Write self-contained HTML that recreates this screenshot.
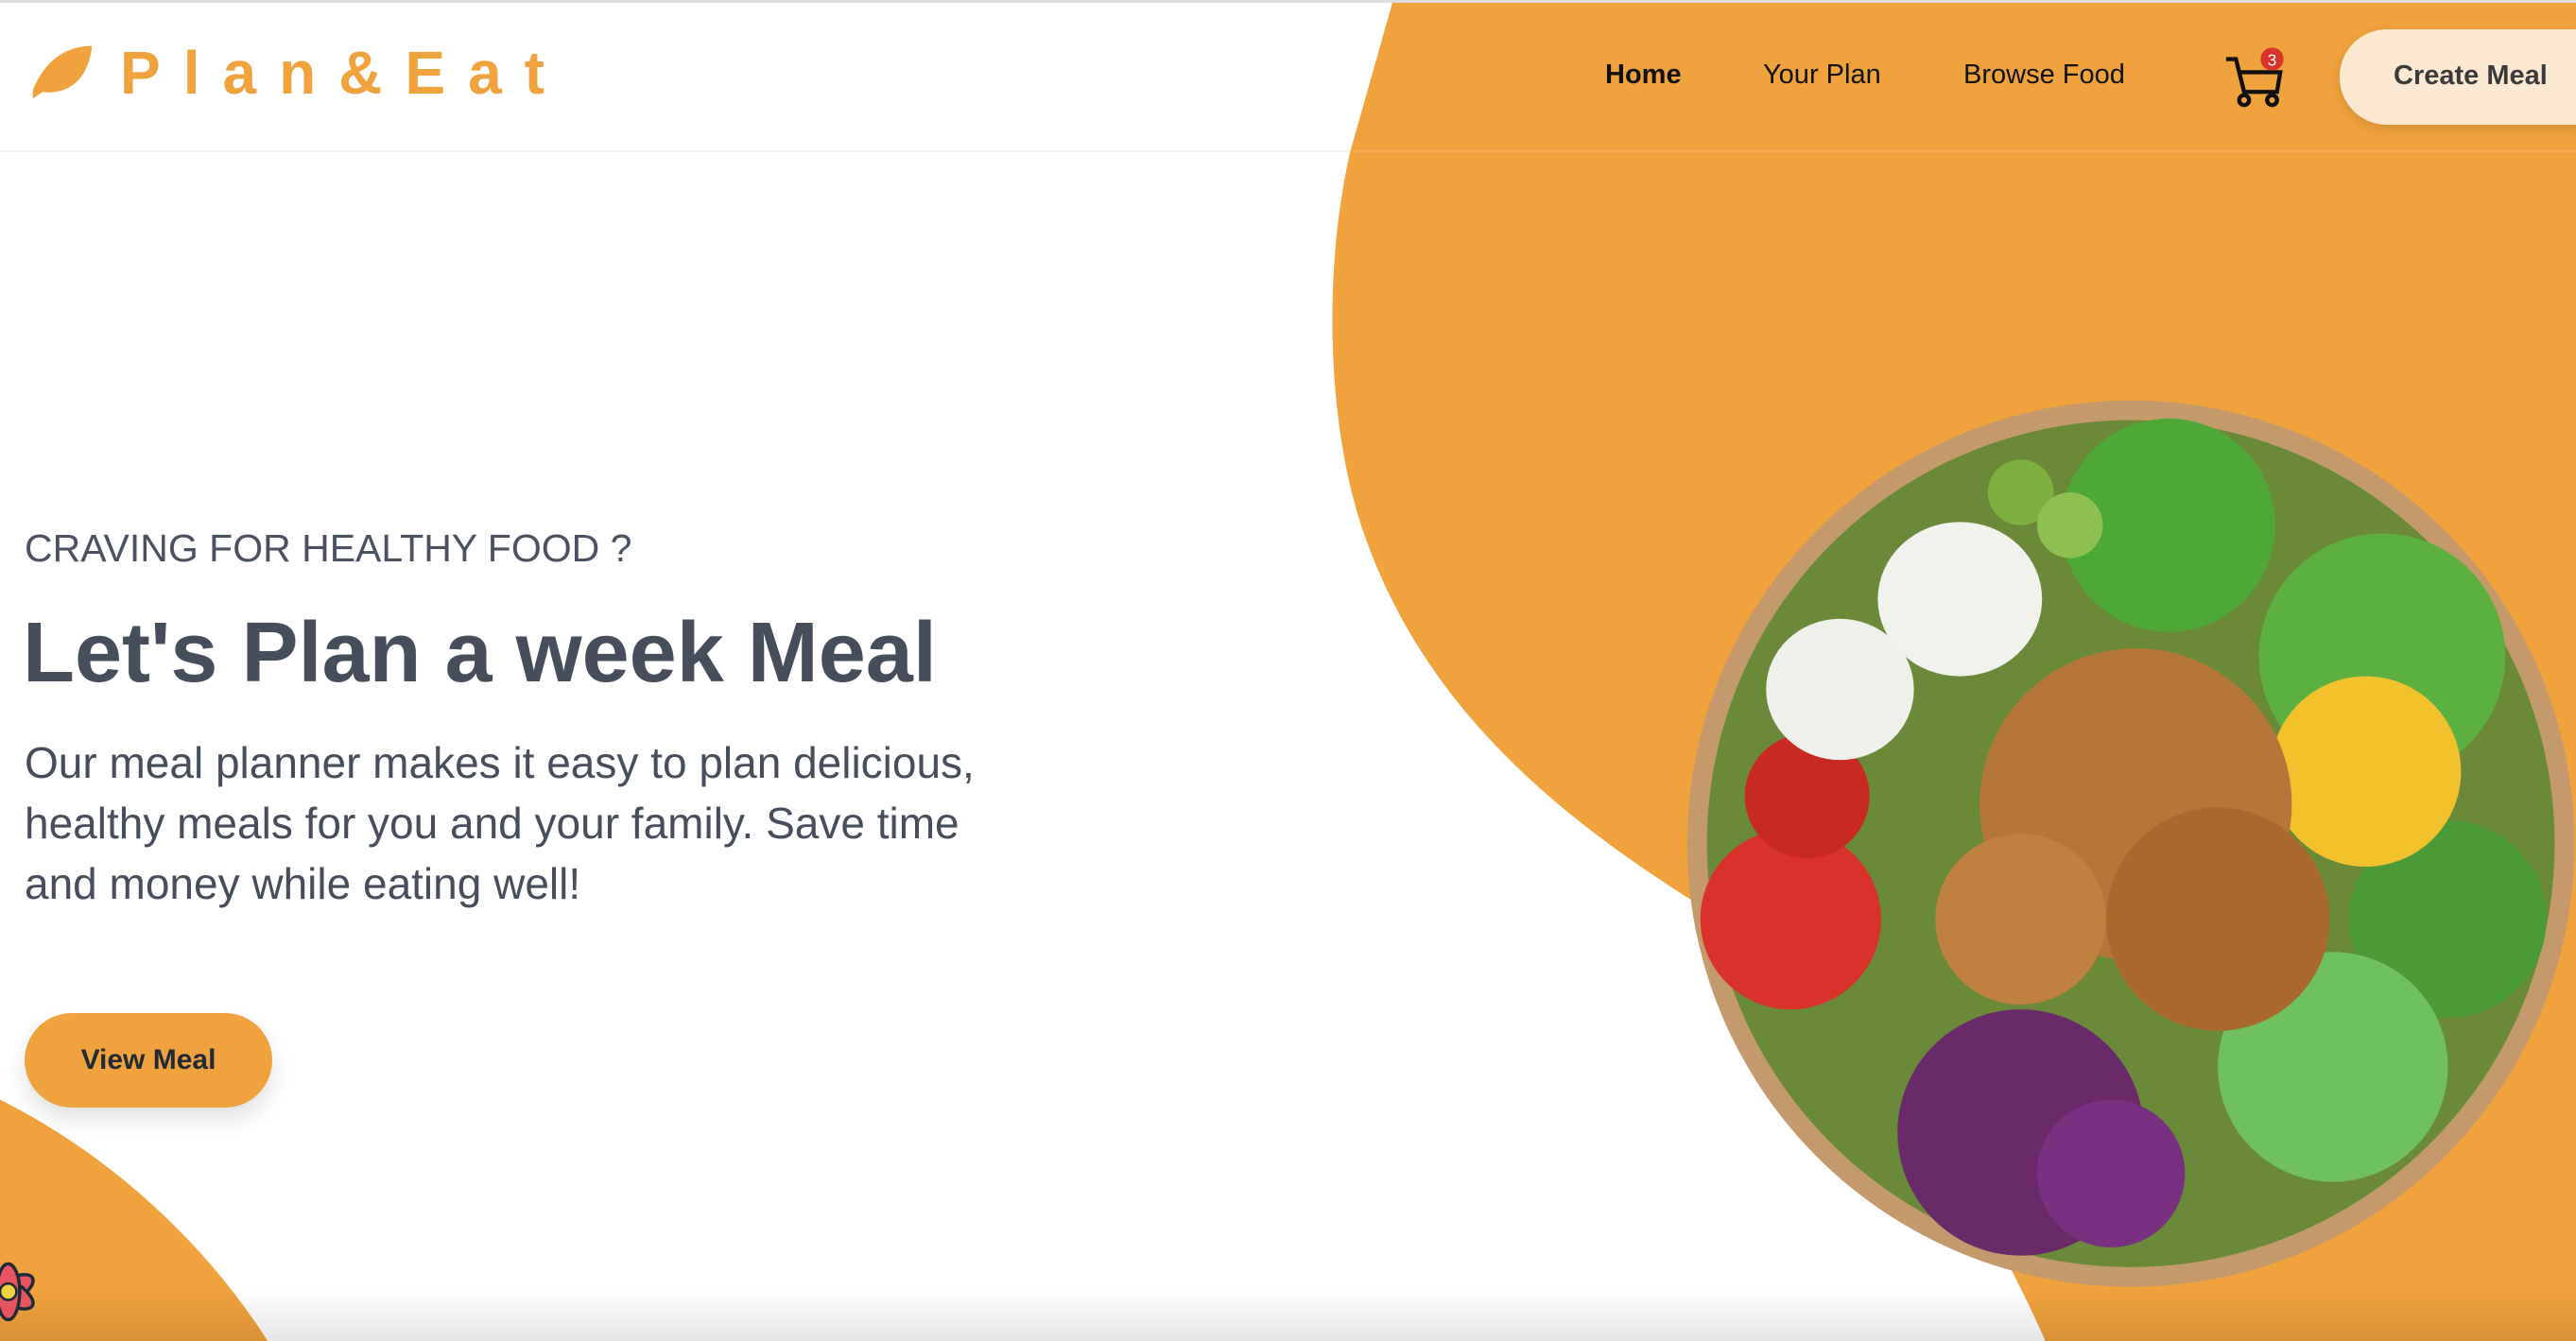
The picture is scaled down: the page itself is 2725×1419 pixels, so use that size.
<!DOCTYPE html>
<html><head><meta charset="utf-8"><style>
html,body{margin:0;padding:0}
body{width:2725px;height:1419px;position:relative;overflow:hidden;background:#fff;font-family:"Liberation Sans",sans-serif}
svg.bg{position:absolute;left:0;top:0;width:2725px;height:1419px}
.topline{position:absolute;left:0;top:0;width:2725px;height:3px;background:#dcdcdc}
.hline{position:absolute;left:0;top:159px;width:2725px;height:2px;background:rgba(240,200,160,0.25)}
.logo{position:absolute;left:127px;top:40px;font-size:64px;font-weight:bold;color:#f0a23c;letter-spacing:24px}
.nav{position:absolute;top:63px;font-size:29px;color:#111}
.btn1{position:absolute;left:2475px;top:31px;width:300px;height:101px;border-radius:50px;background:#fce8d0;box-shadow:0 4px 12px rgba(0,0,0,0.12)}
.btn1 span{position:absolute;left:57px;top:33px;font-size:29px;font-weight:bold;color:#3a3a3a}
.t1{position:absolute;left:26px;top:557px;font-size:41px;color:#4a5160}
.t2{position:absolute;left:24px;top:640px;font-size:90px;font-weight:bold;color:#464e5c}
.t3{position:absolute;left:26px;top:775px;font-size:46px;line-height:64px;color:#464e5c;white-space:nowrap}
.vm{position:absolute;left:26px;top:1072px;width:262px;height:100px;border-radius:50px;background:#f0a23c;box-shadow:0 12px 24px rgba(0,0,0,0.12);text-align:center;line-height:100px;font-size:30px;font-weight:bold;color:#222a36}
</style></head><body>
<svg class="bg" viewBox="0 0 1568 817" preserveAspectRatio="none">
<defs><linearGradient id="fade" x1="0" y1="0" x2="0" y2="1"><stop offset="0" stop-color="#000" stop-opacity="0"/><stop offset="1" stop-color="#000" stop-opacity="0.1"/></linearGradient></defs>
<path d="M848,0 L822,92 C806,160 806,260 832,330 C872,440 960,505 1040,555 C1130,615 1200,715 1245,817 L1568,817 L1568,0 Z" fill="#f0a23c"/>
<path d="M0,670 C60,700 120,750 163,817 L0,817 Z" fill="#f0a23c"/>
<rect x="0" y="785" width="1568" height="32" fill="url(#fade)"/>
<circle cx="1297" cy="514" r="270" fill="#c49a6c"/>
<circle cx="1297" cy="514" r="258" fill="#6a8a3a"/>
<circle cx="1320" cy="320" r="65" fill="#4ea838"/>
<circle cx="1450" cy="400" r="75" fill="#5bb040"/>
<circle cx="1490" cy="560" r="60" fill="#4a9a38"/>
<circle cx="1440" cy="470" r="58" fill="#f2c22c"/>
<circle cx="1420" cy="650" r="70" fill="#6fc060"/>
<circle cx="1230" cy="690" r="75" fill="#6a2a6a"/>
<circle cx="1285" cy="715" r="45" fill="#7a3080"/>
<circle cx="1090" cy="560" r="55" fill="#d8322a"/>
<circle cx="1100" cy="485" r="38" fill="#c82a22"/>
<circle cx="1300" cy="490" r="95" fill="#b5763a"/>
<circle cx="1350" cy="560" r="68" fill="#a8682e"/>
<circle cx="1230" cy="560" r="52" fill="#c08040"/>
<ellipse cx="1193" cy="365" rx="50" ry="47" fill="#f2f2ec"/>
<ellipse cx="1120" cy="420" rx="45" ry="43" fill="#f0f0ea"/>
<circle cx="1230" cy="300" r="20" fill="#7cb040"/>
<circle cx="1260" cy="320" r="20" fill="#8cc050"/>
<path d="M20,55 C28,35 42,28 56,28 C54,48 42,58 26,56 L20,60 Z" fill="#f0a23c"/>
<g fill="none" stroke="#111" stroke-width="2.5"><path d="M1355,36 L1361,36 L1366,56 L1386,56 L1388,44 L1363,44"/><circle cx="1366" cy="61" r="3"/><circle cx="1383" cy="61" r="3"/></g>
<circle cx="1383" cy="36" r="7" fill="#d9342b"/>
<text x="1383" y="40" font-size="10" fill="#fff" text-anchor="middle" font-family="Liberation Sans">3</text>
<g transform="translate(5,787)"><ellipse rx="7" ry="17" fill="#e85560" stroke="#1e2a3a" stroke-width="2" transform="rotate(60)"/><ellipse rx="7" ry="17" fill="#e85560" stroke="#1e2a3a" stroke-width="2" transform="rotate(-60)"/><ellipse rx="7" ry="17" fill="#e85560" stroke="#1e2a3a" stroke-width="2"/><circle r="5" fill="#f2d040" stroke="#1e2a3a" stroke-width="1.5"/></g>
</svg>
<div class="topline"></div>
<div class="hline"></div>
<div class="logo">Plan&amp;Eat</div>
<div class="nav" style="left:1698px;font-weight:bold">Home</div>
<div class="nav" style="left:1865px">Your Plan</div>
<div class="nav" style="left:2077px">Browse Food</div>
<div class="btn1"><span>Create Meal</span></div>
<div class="t1">CRAVING FOR HEALTHY FOOD ?</div>
<div class="t2">Let's Plan a week Meal</div>
<div class="t3">Our meal planner makes it easy to plan delicious,<br>healthy meals for you and your family. Save time<br>and money while eating well!</div>
<div class="vm">View Meal</div>
</body></html>
